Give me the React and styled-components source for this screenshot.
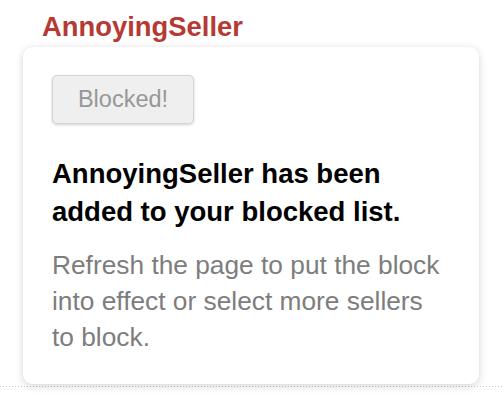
import React from "react";
import styled, { createGlobalStyle } from "styled-components";

const Global = createGlobalStyle`
  html, body { margin: 0; padding: 0; background: #fff; }
  body { font-family: "Liberation Sans", Arial, Helvetica, sans-serif; }
`;

const Page = styled.div`
  width: 504px;
  height: 414px;
  position: relative;
  overflow: hidden;
  background: #fff;
`;

const SellerName = styled.div`
  padding: 11px 0 0 42px;
  height: 36px;
  box-sizing: border-box;
  font-size: 27.4px;
  line-height: 31px;
  font-weight: 700;
  color: #b63a34;
`;

const Divider = styled.div`
  height: 1px;
  margin-top: 2px;
  background-image: linear-gradient(to right, #c8c8c8 1px, transparent 1px);
  background-size: 3px 1px;
`;

const Card = styled.div`
  position: relative;
  z-index: 1;
  margin: 11px 0 0 23px;
  width: 456px;
  height: 337px;
  box-sizing: border-box;
  padding: 28px 20px 0 29px;
  background: #fff;
  border-radius: 9px;
  box-shadow: 0 2px 8px rgba(0, 0, 0, 0.16), 0 0 1px rgba(0, 0, 0, 0.08);
`;

const BlockedButton = styled.button`
  display: block;
  width: 142px;
  height: 49px;
  padding: 0;
  margin: 0;
  font-family: inherit;
  font-size: 23.5px;
  color: #979797;
  background: #efefef;
  border: 1px solid #d4d4d4;
  border-radius: 5px;
  box-shadow: 0 1px 3px rgba(0, 0, 0, 0.18);
`;

const Headline = styled.p`
  margin: 31px 0 0;
  font-size: 27.5px;
  line-height: 38px;
  font-weight: 700;
  color: #000;
`;

const Note = styled.p`
  margin: 16px 0 0;
  font-size: 26.3px;
  line-height: 36px;
  color: #7d7d7d;
`;

export default function App() {
  return (
    <Page>
      <Global />
      <SellerName>AnnoyingSeller</SellerName>
      <Card>
        <BlockedButton disabled>Blocked!</BlockedButton>
        <Headline>
          AnnoyingSeller has been
          <br />
          added to your blocked list.
        </Headline>
        <Note>
          Refresh the page to put the block
          <br />
          into effect or select more sellers
          <br />
          to block.
        </Note>
      </Card>
      <Divider />
    </Page>
  );
}
